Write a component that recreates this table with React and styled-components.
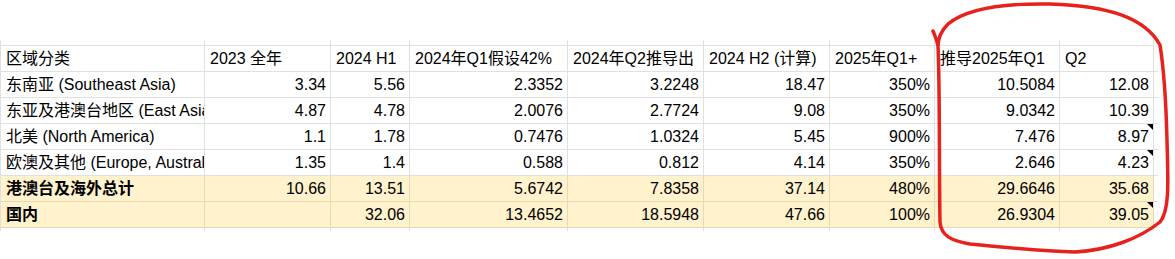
import React from 'react';
import styled, { createGlobalStyle } from 'styled-components';

const Global = createGlobalStyle`
  html, body { margin: 0; padding: 0; background: #fff; }
`

const LINE = '#e0e0e0'
const LINE_FILL = '#e6d9b3'
const FILL = '#fff2cc'

const COLS = [204, 126, 79, 158, 136, 126, 105, 125, 94]

const Page = styled.div`
  position: relative;
  width: 1175px;
  height: 259px;
  overflow: hidden;
  padding-top: 40px;
  box-sizing: border-box;
`

const Sheet = styled.div`
  display: grid;
  grid-template-columns: ${COLS.map(w => w + 'px').join(' ')} 4px;
  grid-template-rows: 6px repeat(7, 26px) 3px;
  border-left: 1px solid ${LINE};
  width: max-content;
  font-family: "Liberation Sans", "Noto Sans CJK SC", sans-serif;
  font-size: 16px;
  color: #000;
`

const Stub = styled.div`
  box-sizing: border-box;
  border-right: ${p => p.$side ? 'none' : `1px solid ${LINE}`};
  border-bottom: ${p => p.$bottom ? `1px solid ${p.$fill ? LINE_FILL : LINE}` : 'none'};
`

const Cell = styled.div`
  position: relative;
  box-sizing: border-box;
  display: flex;
  align-items: center;
  justify-content: ${p => p.$right ? 'flex-end' : 'flex-start'};
  padding: 0 4px 0 5px;
  line-height: 25px;
  white-space: nowrap;
  overflow: hidden;
  font-weight: ${p => p.$bold ? 700 : 400};
  background: ${p => p.$fill ? FILL : '#fff'};
  border-right: 1px solid ${p => p.$fill ? LINE_FILL : LINE};
  border-bottom: 1px solid ${p => p.$fill ? LINE_FILL : LINE};

  &::after {
    content: '';
    display: ${p => p.$note ? 'block' : 'none'};
    position: absolute;
    top: 0;
    right: 0;
    border-style: solid;
    border-width: 0 6px 6px 0;
    border-color: transparent #000 transparent transparent;
  }
`

const Mark = styled.svg`
  position: absolute;
  left: 0;
  top: 0;
  pointer-events: none;
`

const header = ['区域分类', '2023 全年', '2024 H1', '2024年Q1假设42%', '2024年Q2推导出', '2024 H2 (计算)', '2025年Q1+', '推导2025年Q1', 'Q2']

const rows = [
  { cells: ['东南亚 (Southeast Asia)', '3.34', '5.56', '2.3352', '3.2248', '18.47', '350%', '10.5084', '12.08'] },
  { cells: ['东亚及港澳台地区 (East Asia & HK/Macau/Taiwan)', '4.87', '4.78', '2.0076', '2.7724', '9.08', '350%', '9.0342', '10.39'] },
  { cells: ['北美 (North America)', '1.1', '1.78', '0.7476', '1.0324', '5.45', '900%', '7.476', '8.97'], note: true },
  { cells: ['欧澳及其他 (Europe, Australia & Others)', '1.35', '1.4', '0.588', '0.812', '4.14', '350%', '2.646', '4.23'], note: true },
  { cells: ['港澳台及海外总计', '10.66', '13.51', '5.6742', '7.8358', '37.14', '480%', '29.6646', '35.68'], total: true },
  { cells: ['国内', '', '32.06', '13.4652', '18.5948', '47.66', '100%', '26.9304', '39.05'], total: true, note: true },
]

export default function App() {
  return (
    <Page>
      <Global />
      <Sheet>
        {COLS.map((_, i) => <Stub key={'t' + i} $bottom />)}
        <Stub $side />

        {header.map((h, i) => <Cell key={'h' + i}>{h}</Cell>)}
        <Stub $side $bottom />

        {rows.map((r, ri) => (
          <React.Fragment key={ri}>
            {r.cells.map((c, ci) => (
              <Cell
                key={ci}
                $right={ci > 0}
                $bold={r.total && ci === 0}
                $fill={r.total}
                $note={r.note && ci === r.cells.length - 1}
              >
                {c}
              </Cell>
            ))}
            <Stub $side $bottom />
          </React.Fragment>
        ))}

        {COLS.map((_, i) => <Stub key={'b' + i} />)}
        <Stub $side />
      </Sheet>

      <Mark width="1175" height="259" viewBox="0 0 1175 259">
        <path
          d="M 933 31 C 935 36, 937 40, 938 46
             C 940 90, 939 170, 940 222
             C 941 236, 952 241, 970 244
             C 1000 247, 1040 251, 1075 252
             C 1110 250, 1140 238, 1160 222
             C 1170 210, 1168 180, 1167 140
             C 1166 100, 1164 70, 1160 45
             C 1145 18, 1110 6, 1050 4
             C 1000 3, 965 10, 948 24
             C 941 31, 938 38, 938 46"
          fill="none"
          stroke="#e5221d"
          strokeWidth="3.5"
          strokeLinecap="round"
          strokeLinejoin="round"
        />
      </Mark>
    </Page>
  )
}
